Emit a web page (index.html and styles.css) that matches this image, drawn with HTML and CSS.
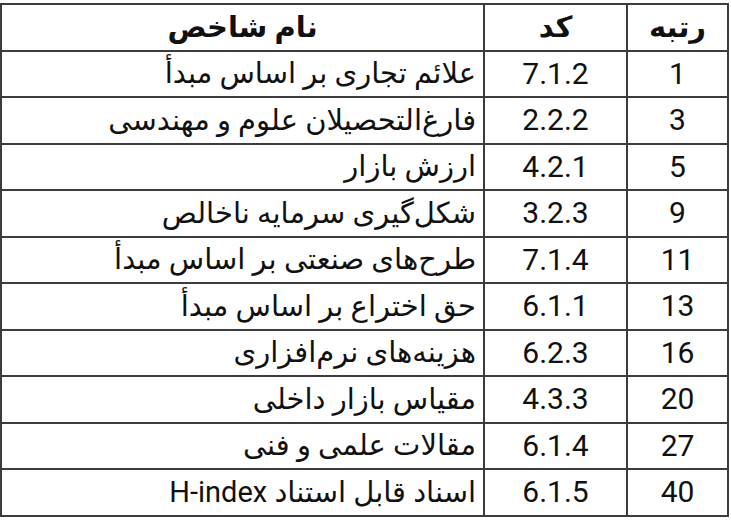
FILE: index.html
```html
<!DOCTYPE html>
<html lang="fa" dir="rtl">
<head>
<meta charset="utf-8">
<link rel="stylesheet" href="styles.css">
</head>
<body>
<table class="grid">
  <colgroup>
    <col class="c-rank">
    <col class="c-code">
    <col class="c-name">
  </colgroup>
  <thead>
    <tr><th>رتبه</th><th>کد</th><th>نام شاخص</th></tr>
  </thead>
  <tbody>
    <tr><td class="num">1</td><td class="num">7.1.2</td><td class="name">علائم تجاری بر اساس مبدأ</td></tr>
    <tr><td class="num">3</td><td class="num">2.2.2</td><td class="name">فارغ‌التحصیلان علوم و مهندسی</td></tr>
    <tr><td class="num">5</td><td class="num">4.2.1</td><td class="name">ارزش بازار</td></tr>
    <tr><td class="num">9</td><td class="num">3.2.3</td><td class="name">شکل‌گیری سرمایه ناخالص</td></tr>
    <tr><td class="num">11</td><td class="num">7.1.4</td><td class="name">طرح‌های صنعتی بر اساس مبدأ</td></tr>
    <tr><td class="num">13</td><td class="num">6.1.1</td><td class="name">حق اختراع بر اساس مبدأ</td></tr>
    <tr><td class="num">16</td><td class="num">6.2.3</td><td class="name">هزینه‌های نرم‌افزاری</td></tr>
    <tr><td class="num">20</td><td class="num">4.3.3</td><td class="name">مقیاس بازار داخلی</td></tr>
    <tr><td class="num">27</td><td class="num">6.1.4</td><td class="name">مقالات علمی و فنی</td></tr>
    <tr><td class="num">40</td><td class="num">6.1.5</td><td class="name">اسناد قابل استناد H-index</td></tr>
  </tbody>
</table>
</body>
</html>
```
FILE: styles.css
```css
html, body {
  margin: 0;
  background: #ffffff;
}
body {
  padding: 3px 2px 0 2px;
  font-family: Roboto, "DejaVu Sans", sans-serif;
  color: #111111;
}
.grid {
  border-collapse: collapse;
  width: 727px;
  table-layout: fixed;
}
.c-rank { width: 101px; }
.c-code { width: 143px; }
.c-name { width: 483px; }
.grid th,
.grid td {
  border: 2px solid #3c3c3c;
  height: 44.5px;
  padding: 0 7px;
  font-size: 30px;
  line-height: 1;
  text-align: center;
  vertical-align: middle;
}
.grid th {
  font-weight: bold;
  font-size: 29px;
}
.grid td.name {
  text-align: right;
  font-size: 29px;
}
```
